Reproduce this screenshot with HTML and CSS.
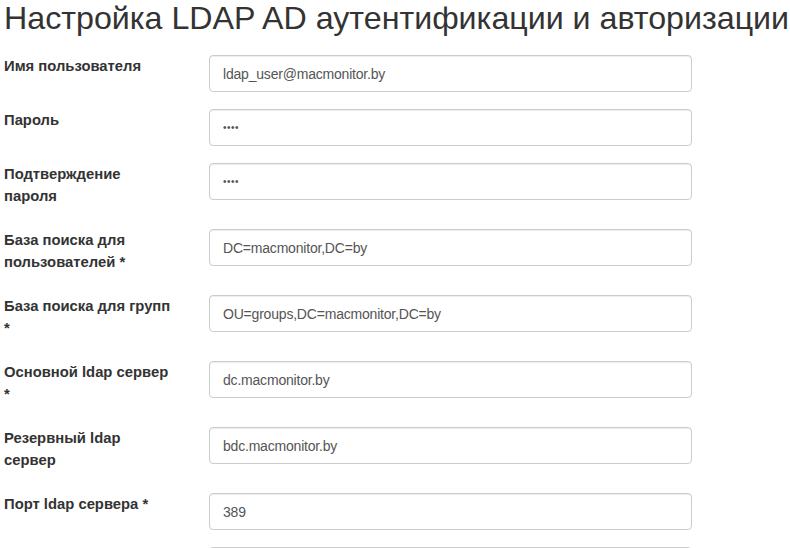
FILE: index.html
```html
<!DOCTYPE html>
<html lang="ru">
<head>
    <meta charset="UTF-8">
    <meta name="viewport" content="width=device-width, initial-scale=1.0">
    <title>Настройка LDAP AD</title>
    <link rel="stylesheet" href="styles.css">
</head>
<body>
    <div class="page">
        <h1>Настройка LDAP AD аутентификации и авторизации</h1>

        <form class="ldap-form">
            <div class="form-group">
                <label class="control-label" for="ldap-user">Имя пользователя</label>
                <input class="form-control" id="ldap-user" type="text" value="ldap_user@macmonitor.by">
            </div>
            <div class="form-group">
                <label class="control-label" for="ldap-pass">Пароль</label>
                <input class="form-control pwd" id="ldap-pass" type="password" value="1234">
            </div>
            <div class="form-group">
                <label class="control-label" for="ldap-pass2">Подтверждение пароля</label>
                <input class="form-control pwd" id="ldap-pass2" type="password" value="1234">
            </div>
            <div class="form-group">
                <label class="control-label" for="user-base">База поиска для пользователей *</label>
                <input class="form-control" id="user-base" type="text" value="DC=macmonitor,DC=by">
            </div>
            <div class="form-group">
                <label class="control-label" for="group-base">База поиска для групп *</label>
                <input class="form-control" id="group-base" type="text" value="OU=groups,DC=macmonitor,DC=by">
            </div>
            <div class="form-group">
                <label class="control-label" for="main-server">Основной ldap сервер *</label>
                <input class="form-control" id="main-server" type="text" value="dc.macmonitor.by">
            </div>
            <div class="form-group">
                <label class="control-label" for="backup-server">Резервный ldap сервер</label>
                <input class="form-control" id="backup-server" type="text" value="bdc.macmonitor.by">
            </div>
            <div class="form-group">
                <label class="control-label" for="ldap-port">Порт ldap сервера *</label>
                <input class="form-control" id="ldap-port" type="text" value="389">
            </div>
            <div class="form-group">
                <span class="control-label"></span>
                <input class="form-control" id="ldap-extra" type="text" value="">
            </div>
        </form>
    </div>
</body>
</html>
```

FILE: styles.css
```css
* {
    box-sizing: border-box;
}

body {
    margin: 0;
    font-family: "Liberation Sans", Arial, sans-serif;
    font-size: 15.4px;
    line-height: 22px;
    color: #333;
    background: #fff;
}

.page {
    padding: 0 4px;
}

h1 {
    font-size: 32.2px;
    font-weight: normal;
    line-height: 36px;
    white-space: nowrap;
    margin: 0 0 19px;
}

.form-group {
    display: grid;
    grid-template-columns: 205px 483px;
    align-items: start;
    margin-bottom: 17px;
}

.control-label {
    display: block;
    width: 171px;
    min-height: 22px;
    margin-bottom: 5px;
    font-size: 14.8px;
    font-weight: bold;
}

.form-control {
    display: block;
    width: 100%;
    height: 37px;
    padding: 6px 13px;
    font-family: inherit;
    font-size: 14px;
    letter-spacing: -0.2px;
    color: #555;
    background: #fff;
    border: 1px solid #ccc;
    border-radius: 4px;
    box-shadow: inset 0 1px 1px rgba(0, 0, 0, 0.075);
}

.form-control.pwd {
    font-size: 10px;
    letter-spacing: 0.5px;
}
```
